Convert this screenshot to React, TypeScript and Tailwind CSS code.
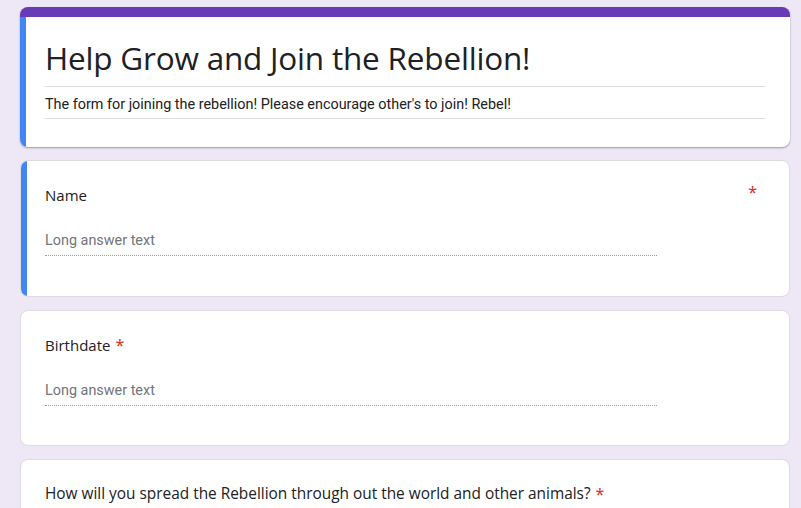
import React from 'react'

const sans = "font-['Open_Sans',_'Liberation_Sans',_sans-serif]"
const roboto = "font-['Roboto',_'Liberation_Sans',_sans-serif]"

function AnswerField() {
  return (
    <div className="mt-[20px] w-[612px] border-b border-dotted border-[#9aa0a6] pb-[4px]">
      <span className={`${roboto} text-[14.4px] leading-[20px] text-[#70757a]`}>Long answer text</span>
    </div>
  )
}

function Star() {
  return <span className="ml-[5px] text-[#d93025] text-[16px]">*</span>
}

export default function App() {
  return (
    <div className="h-[508px] bg-[#ede7f6] pt-[7px] overflow-hidden">
      <div className="ml-[20px] w-[770px] flex flex-col gap-[13px]">
        {/* header card */}
        <div className="relative rounded-[8px] bg-white border-t-[10px] border-[#673ab7] shadow-[0_1px_2px_rgba(0,0,0,0.35)] overflow-hidden">
          <div className="absolute left-0 top-0 bottom-0 w-[6px] bg-[#4285f4]" />
          <div className="pl-[25px] pr-[25px] pt-[17px] pb-[28px]">
            <h1 className={`${sans} text-[31.5px] leading-[48px] text-[#202124] tracking-[-0.2px] border-b border-[#dadce0] pb-[4px]`}>
              Help Grow and Join the Rebellion!
            </h1>
            <p className={`${roboto} text-[14.4px] leading-[20px] text-[#202124] pt-[8px] pb-[3px] border-b border-[#dadce0]`}>
              The form for joining the rebellion! Please encourage other's to join! Rebel!
            </p>
          </div>
        </div>

        {/* Name */}
        <div className="relative rounded-[8px] bg-white border border-[#dadce0] overflow-hidden h-[137px]">
          <div className="absolute left-0 top-0 bottom-0 w-[6px] bg-[#4285f4]" />
          <div className="pl-[24px] pr-[32px] pt-[22px]">
            <div className="flex justify-between items-start">
              <span className={`${sans} text-[15px] leading-[24px] text-[#202124]`}>Name</span>
              <span className="text-[#d93025] text-[16px] leading-[18px]">*</span>
            </div>
            <AnswerField />
          </div>
        </div>

        {/* Birthdate */}
        <div className="rounded-[8px] bg-white border border-[#dadce0] h-[136px]">
          <div className="pl-[24px] pr-[24px] pt-[22px]">
            <div className="flex items-start">
              <span className={`${sans} text-[15px] leading-[24px] text-[#202124]`}>Birthdate</span>
              <Star />
            </div>
            <AnswerField />
          </div>
        </div>

        {/* Spread */}
        <div className="rounded-[8px] bg-white border border-[#dadce0] h-[120px]">
          <div className="pl-[24px] pr-[24px] pt-[22px]">
            <div className="flex items-start">
              <span className={`${sans} text-[15.4px] leading-[24px] text-[#202124]`}>
                How will you spread the Rebellion through out the world and other animals?
              </span>
              <Star />
            </div>
          </div>
        </div>
      </div>
    </div>
  )
}
